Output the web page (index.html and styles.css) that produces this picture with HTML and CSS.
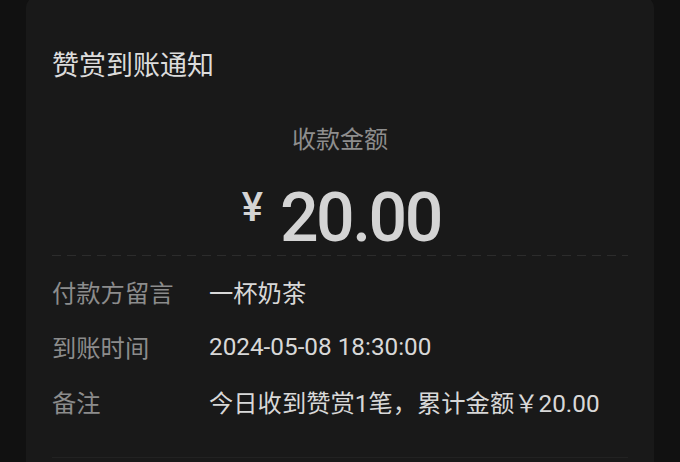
FILE: index.html
```html
<!DOCTYPE html>
<html lang="zh-CN">
<head>
  <meta charset="UTF-8">
  <meta name="viewport" content="width=device-width, initial-scale=1.0">
  <title>赞赏到账通知</title>
  <link rel="stylesheet" href="styles.css">
</head>
<body>

  <!-- Notification card -->
  <div class="card">
    <div class="card-title">赞赏到账通知</div>

    <!-- Amount -->
    <div class="amount-label">收款金额</div>
    <div class="amount">
      <span class="amount-currency">¥</span>
      <span class="amount-value">20.00</span>
    </div>
    <div class="dash-line"></div>

    <!-- Details -->
    <div class="details">
      <div class="detail-row">
        <div class="detail-key">付款方留言</div>
        <div class="detail-value">一杯奶茶</div>
      </div>
      <div class="detail-row">
        <div class="detail-key">到账时间</div>
        <div class="detail-value">2024-05-08 18:30:00</div>
      </div>
      <div class="detail-row">
        <div class="detail-key">备注</div>
        <div class="detail-value">今日收到赞赏1笔，累计金额￥20.00</div>
      </div>
    </div>

    <div class="card-divider"></div>
  </div>

</body>
</html>
```

FILE: styles.css
```css
/* Global styles */
body {
  margin: 0;
  padding: 0;
  background-color: #111111;
  font-family: Roboto, "Noto Sans CJK SC", sans-serif;
  color: #d6d6d6;
  height: 462px;
  overflow: hidden;
}

/* Card */
.card {
  width: 576px;
  height: 414px;
  margin: -4px 26px 0;
  padding: 52px 26px 0;
  background-color: #191919;
  border-radius: 12px 12px 0 0;
}

.card-title {
  font-size: 27px;
  line-height: 36px;
  color: #dcdcdc;
}

/* Amount */
.amount-label {
  margin-top: 41px;
  text-align: center;
  font-size: 24px;
  line-height: 30px;
  color: #8e8e8e;
}

.amount {
  display: flex;
  justify-content: center;
  align-items: flex-start;
  margin-top: 28px;
  height: 70px;
  color: #d4d4d4;
}

.amount-currency {
  font-size: 40px;
  line-height: 40px;
  margin-top: 5px;
  margin-right: 17px;
  font-weight: 500;
}

.amount-value {
  font-size: 68px;
  line-height: 70px;
  font-weight: 500;
  letter-spacing: -2.5px;
  margin-right: -2.5px;
}

.dash-line {
  margin-top: 2px;
  height: 1px;
  background: repeating-linear-gradient(to right, #2c2c2c 0 9px, transparent 9px 15px);
}

/* Details */
.details {
  margin-top: 8px;
}

.detail-row {
  display: flex;
  height: 55px;
  align-items: center;
  font-size: 24.3px;
}

.detail-key {
  width: 157px;
  color: #8c8c8c;
}

.detail-value {
  color: #d8d8d8;
}

.card-divider {
  margin-top: 28px;
  height: 1px;
  background-color: #222222;
}
```
